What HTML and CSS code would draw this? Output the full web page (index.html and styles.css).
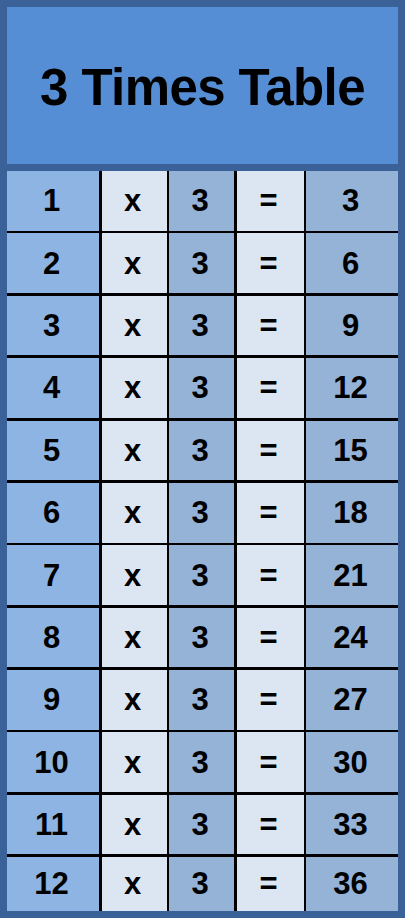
FILE: index.html
```html
<!DOCTYPE html>
<html lang="en">
<head>
<meta charset="utf-8">
<title>3 Times Table</title>
<link rel="stylesheet" href="styles.css">
</head>
<body>
<div class="sheet">
  <div class="title"><h1>3 Times Table</h1></div>
  <div class="table">
    <div class="c c1">1</div><div class="c c2">x</div><div class="c c3">3</div><div class="c c4">=</div><div class="c c5">3</div>
    <div class="c c1">2</div><div class="c c2">x</div><div class="c c3">3</div><div class="c c4">=</div><div class="c c5">6</div>
    <div class="c c1">3</div><div class="c c2">x</div><div class="c c3">3</div><div class="c c4">=</div><div class="c c5">9</div>
    <div class="c c1">4</div><div class="c c2">x</div><div class="c c3">3</div><div class="c c4">=</div><div class="c c5">12</div>
    <div class="c c1">5</div><div class="c c2">x</div><div class="c c3">3</div><div class="c c4">=</div><div class="c c5">15</div>
    <div class="c c1">6</div><div class="c c2">x</div><div class="c c3">3</div><div class="c c4">=</div><div class="c c5">18</div>
    <div class="c c1">7</div><div class="c c2">x</div><div class="c c3">3</div><div class="c c4">=</div><div class="c c5">21</div>
    <div class="c c1">8</div><div class="c c2">x</div><div class="c c3">3</div><div class="c c4">=</div><div class="c c5">24</div>
    <div class="c c1">9</div><div class="c c2">x</div><div class="c c3">3</div><div class="c c4">=</div><div class="c c5">27</div>
    <div class="c c1">10</div><div class="c c2">x</div><div class="c c3">3</div><div class="c c4">=</div><div class="c c5">30</div>
    <div class="c c1">11</div><div class="c c2">x</div><div class="c c3">3</div><div class="c c4">=</div><div class="c c5">33</div>
    <div class="c c1">12</div><div class="c c2">x</div><div class="c c3">3</div><div class="c c4">=</div><div class="c c5">36</div>
  </div>
</div>
</body>
</html>
```
FILE: styles.css
```css
html, body {
  margin: 0;
  padding: 0;
}
body {
  width: 405px;
  height: 918px;
  background: #3b6298;
  font-family: "Liberation Sans", Arial, sans-serif;
  color: #000;
}
.sheet {
  box-sizing: border-box;
  width: 405px;
  height: 918px;
  padding: 7px;
  display: flex;
  flex-direction: column;
  gap: 7px;
}
.title {
  height: 157px;
  background: #558ed5;
  display: flex;
  align-items: center;
  justify-content: center;
  padding-top: 3px;
  box-sizing: border-box;
}
.title h1 {
  margin: 0;
  font-size: 51px;
  font-weight: bold;
  letter-spacing: -0.6px;
  line-height: 1;
}
.table {
  display: grid;
  grid-template-columns: 92px 65px 65px 67px 92px;
  grid-template-rows: repeat(11, 59.7px) 53.6px;
  column-gap: 2.5px;
  row-gap: 2.7px;
  background: #000;
  height: 740px;
}
.c {
  display: flex;
  align-items: center;
  justify-content: center;
  padding-right: 3px;
  font-size: 31px;
  font-weight: bold;
  line-height: 1;
}
.c1 { background: #8db4e2; }
.c2, .c4 { background: #dce6f2; }
.c3, .c5 { background: #95b3d7; }
```
